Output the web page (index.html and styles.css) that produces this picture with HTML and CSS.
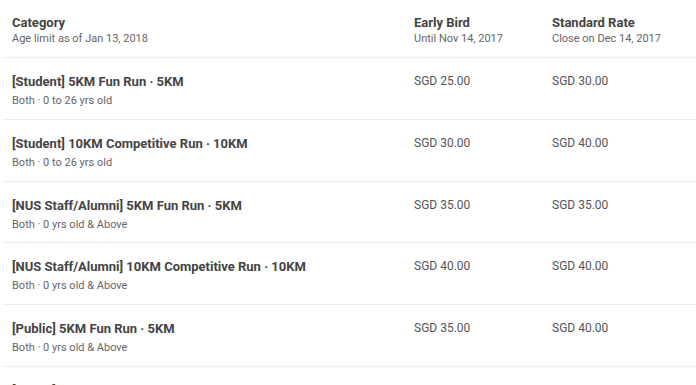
FILE: index.html
```html
<!DOCTYPE html>
<html>
<head>
<meta charset="utf-8">
<link rel="stylesheet" href="styles.css">
</head>
<body>
<div class="table">
  <div class="row head">
    <div class="cell">
      <div class="h-title">Category</div>
      <div class="h-sub">Age limit as of Jan 13, 2018</div>
    </div>
    <div class="cell">
      <div class="h-title">Early Bird</div>
      <div class="h-sub">Until Nov 14, 2017</div>
    </div>
    <div class="cell">
      <div class="h-title">Standard Rate</div>
      <div class="h-sub">Close on Dec 14, 2017</div>
    </div>
  </div>
  <div class="row">
    <div class="cell"><div class="r-title">[Student] 5KM Fun Run · 5KM</div><div class="r-sub">Both · 0 to 26 yrs old</div></div>
    <div class="cell price">SGD 25.00</div>
    <div class="cell price">SGD 30.00</div>
  </div>
  <div class="row">
    <div class="cell"><div class="r-title">[Student] 10KM Competitive Run · 10KM</div><div class="r-sub">Both · 0 to 26 yrs old</div></div>
    <div class="cell price">SGD 30.00</div>
    <div class="cell price">SGD 40.00</div>
  </div>
  <div class="row">
    <div class="cell"><div class="r-title">[NUS Staff/Alumni] 5KM Fun Run · 5KM</div><div class="r-sub">Both · 0 yrs old &amp; Above</div></div>
    <div class="cell price">SGD 35.00</div>
    <div class="cell price">SGD 35.00</div>
  </div>
  <div class="row">
    <div class="cell"><div class="r-title">[NUS Staff/Alumni] 10KM Competitive Run · 10KM</div><div class="r-sub">Both · 0 yrs old &amp; Above</div></div>
    <div class="cell price">SGD 40.00</div>
    <div class="cell price">SGD 40.00</div>
  </div>
  <div class="row">
    <div class="cell"><div class="r-title">[Public] 5KM Fun Run · 5KM</div><div class="r-sub">Both · 0 yrs old &amp; Above</div></div>
    <div class="cell price">SGD 35.00</div>
    <div class="cell price">SGD 40.00</div>
  </div>
  <div class="row">
    <div class="cell"><div class="r-title">[Public] 10KM Competitive Run · 10KM</div><div class="r-sub">Both · 0 yrs old &amp; Above</div></div>
    <div class="cell price">SGD 40.00</div>
    <div class="cell price">SGD 50.00</div>
  </div>
</div>
</body>
</html>
```
FILE: styles.css
```css
html, body {
  margin: 0;
  padding: 0;
  background: #fff;
  overflow: hidden;
}
body {
  font-family: Roboto, "Liberation Sans", sans-serif;
  color: #444;
}
.table {
  padding-left: 3px;
}
.row {
  display: grid;
  grid-template-columns: 402px 138px 1fr;
  border-bottom: 1px solid #ececec;
  height: 60.8px;
  box-sizing: content-box;
}
.row.head {
  height: 57px;
}
.cell {
  padding-left: 9px;
  padding-top: 15px;
}
.h-title {
  font-size: 13px;
  line-height: 16px;
  font-weight: 700;
  color: #444;
}
.h-sub {
  margin-top: 1px;
  font-size: 11px;
  line-height: 14px;
  color: #666;
}
.r-title {
  font-size: 13px;
  line-height: 17px;
  font-weight: 700;
  color: #444;
}
.r-sub {
  margin-top: 4px;
  font-size: 11px;
  line-height: 14px;
  color: #666;
}
.price {
  font-size: 12px;
  line-height: 17px;
  color: #555;
}
```
